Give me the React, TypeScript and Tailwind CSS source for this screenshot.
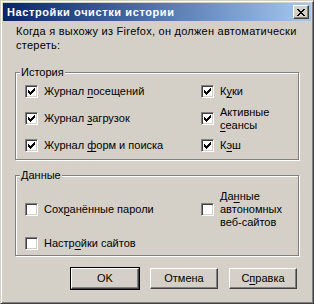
import React from 'react'

function Check({ checked }: { checked: boolean }) {
  return (
    <div className="w-[13px] h-[13px] shrink-0 bg-white border border-t-[#808080] border-l-[#808080] border-r-white border-b-white shadow-[inset_1px_1px_0_#404040,inset_-1px_-1px_0_#d4d0c8]">
      {checked && (
        <svg width="13" height="13" viewBox="0 0 13 13" className="-ml-px -mt-px" shapeRendering="crispEdges">
          <path
            fill="#000"
            d="M9 3h1v1h-1z M8 4h2v1h-2z M3 5h1v1h-1z M7 5h3v1h-3z M3 6h2v1h-2z M6 6h3v1h-3z M3 7h5v1h-5z M4 8h3v1h-3z M5 9h1v1h-1z"
          />
        </svg>
      )}
    </div>
  )
}

function U({ children }: { children: React.ReactNode }) {
  return <span className="underline underline-offset-[2px]">{children}</span>
}

function Item({ checked, children }: { checked: boolean; children: React.ReactNode }) {
  return (
    <div className="flex items-center gap-[6px]">
      <Check checked={checked} />
      <div className="leading-[13px]">{children}</div>
    </div>
  )
}

function Group({ title, className, children }: { title: string; className: string; children: React.ReactNode }) {
  return (
    <div className={'relative border border-[#808080] shadow-[inset_1px_1px_0_#fff,1px_1px_0_#fff] ' + className}>
      <div className="absolute left-[4px] top-[-8px] px-[1px] bg-[#d4d0c8] leading-[14px]">{title}</div>
      {children}
    </div>
  )
}

function Button({ label, isDefault }: { label: React.ReactNode; isDefault?: boolean }) {
  return (
    <div className={isDefault ? 'border border-black' : 'border border-transparent'}>
      <div className="w-[68px] h-[21px] flex items-center justify-center border border-t-white border-l-white border-r-[#404040] border-b-[#404040] shadow-[inset_-1px_-1px_0_#808080]">
        {label}
      </div>
    </div>
  )
}

export default function App() {
  return (
    <div className="w-[314px] h-[304px] bg-[#d4d0c8] border border-t-[#d4d0c8] border-l-[#d4d0c8] border-r-[#404040] border-b-[#404040] shadow-[inset_1px_1px_0_#fff,inset_-1px_-1px_0_#808080] p-[2px] text-[11px] text-black font-['Liberation_Sans',Arial,sans-serif] flex flex-col">
      <div className="h-[18px] bg-gradient-to-r from-[#0a246a] to-[#a6caf0] flex items-center justify-between pl-[4px] pr-[2px]">
        <span className="text-white font-bold text-[11px] tracking-[0.6px]">Настройки очистки истории</span>
        <div className="w-[16px] h-[14px] bg-[#d4d0c8] border border-t-white border-l-white border-r-[#404040] border-b-[#404040] shadow-[inset_-1px_-1px_0_#808080] flex items-center justify-center">
          <svg width="8" height="7" viewBox="0 0 8 7" shapeRendering="crispEdges">
            <path
              fill="#000"
              d="M0 0h2v1h-2z M6 0h2v1h-2z M1 1h2v1h-2z M5 1h2v1h-2z M2 2h4v1h-4z M3 3h2v1h-2z M2 4h4v1h-4z M1 5h2v1h-2z M5 5h2v1h-2z M0 6h2v1h-2z M6 6h2v1h-2z"
            />
          </svg>
        </div>
      </div>

      <div className="flex flex-col px-[12px]">
        <p className="mt-[3px] pl-[1px] leading-[14px] tracking-[0.25px] whitespace-nowrap">
          Когда я выхожу из Firefox, он должен автоматически
          <br />
          стереть:
        </p>

        <Group title="История" className="mt-[20px] h-[88px] pl-[9px] pt-[5px]">
          <div className="grid grid-cols-[176px_1fr] grid-rows-[27px_27px_27px] items-center">
            <Item checked>Журнал <U>п</U>осещений</Item>
            <Item checked>К<U>у</U>ки</Item>
            <Item checked>Журнал <U>з</U>агрузок</Item>
            <Item checked>
              Активные
              <br />
              <U>с</U>еансы
            </Item>
            <Item checked>Журнал <U>ф</U>орм и поиска</Item>
            <Item checked>К<U>э</U>ш</Item>
          </div>
        </Group>

        <Group title="Данные" className="mt-[15px] h-[81px] pl-[9px] pt-[13px]">
          <div className="grid grid-cols-[176px_1fr] grid-rows-[40px_20px] gap-y-[4px] items-center">
            <Item checked={false}>Сох<U>р</U>анённые пароли</Item>
            <Item checked={false}>
              Да<U>н</U>ные
              <br />
              автономных
              <br />
              веб-сайтов
            </Item>
            <Item checked={false}>Настр<U>о</U>йки сайтов</Item>
            <div />
          </div>
        </Group>

        <div className="mt-[11px] flex justify-end gap-[9px] pr-[1px]">
          <Button label="OK" isDefault />
          <Button label="Отмена" />
          <Button label={<span>С<U>п</U>равка</span>} />
        </div>
      </div>
    </div>
  )
}
